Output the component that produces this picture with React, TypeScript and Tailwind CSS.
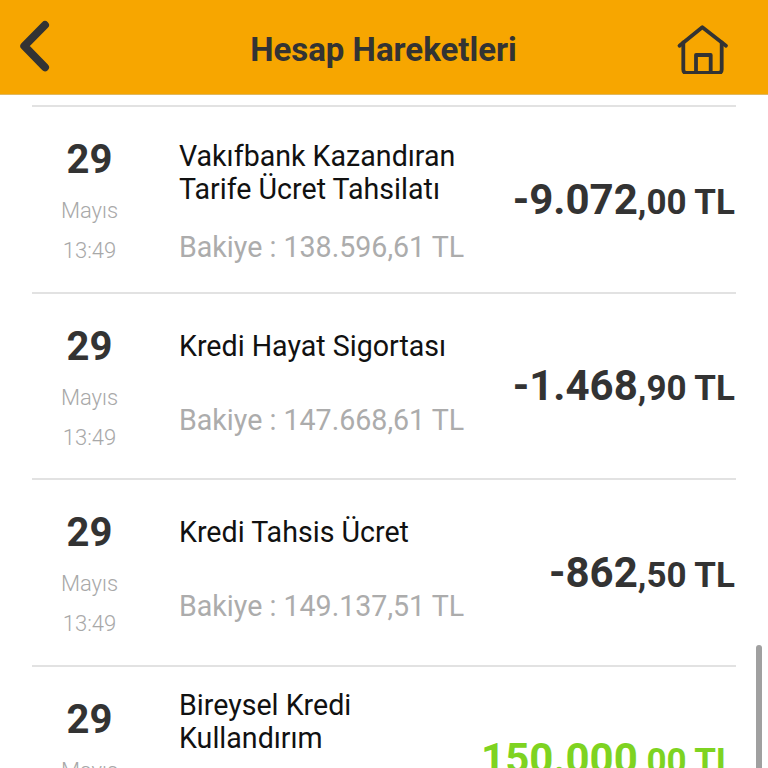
type Movement = {
  title: string[];
  balance: string;
  whole: string;
  cents: string;
  income?: boolean;
  textClass: string;
  titleClass: string;
};

const movements: Movement[] = [
  {
    title: ['Vakıfbank Kazandıran', 'Tarife Ücret Tahsilatı'],
    balance: '138.596,61',
    whole: '-9.072',
    cents: ',00 TL',
    textClass: 'pt-[33px]',
    titleClass: 'h-[85px]',
  },
  {
    title: ['Kredi Hayat Sigortası'],
    balance: '147.668,61',
    whole: '-1.468',
    cents: ',90 TL',
    textClass: 'pt-[36px]',
    titleClass: 'h-[68px]',
  },
  {
    title: ['Kredi Tahsis Ücret'],
    balance: '149.137,51',
    whole: '-862',
    cents: ',50 TL',
    textClass: 'pt-[36px]',
    titleClass: 'h-[68px]',
  },
  {
    title: ['Bireysel Kredi', 'Kullandırım'],
    balance: '149.137,51',
    whole: '150.000',
    cents: ',00 TL',
    income: true,
    textClass: 'pt-[22px]',
    titleClass: 'h-[82px]',
  },
];

function Row({ item }: { item: Movement }) {
  return (
    <li className="flex h-[186.5px] shrink-0 border-t-2 border-[#e2e2e2]">
      <div className="flex w-[115px] shrink-0 flex-col items-center pt-[30px]">
        <span className="text-[40px] leading-[46px] font-bold text-[#333333]">29</span>
        <span className="mt-[15px] text-[22px] leading-[26px] font-light text-[#a8a8a8]">Mayıs</span>
        <span className="mt-[14px] text-[22px] leading-[26px] font-light text-[#a8a8a8]">13:49</span>
      </div>
      <div className={`ml-[32px] flex w-[301px] shrink-0 flex-col ${item.textClass}`}>
        <div className={`${item.titleClass} text-[28.6px] leading-[33px] text-[#111111]`}>
          {item.title.map((line) => (
            <div key={line}>{line}</div>
          ))}
        </div>
        <div className="mt-[5px] text-[28.6px] leading-[34px] whitespace-nowrap text-[#acacac]">
          Bakiye : {item.balance} TL
        </div>
      </div>
      <div className="flex flex-1 items-center justify-end pr-[1px]">
        <span className={`font-bold whitespace-nowrap ${item.income ? 'text-[#7ed321]' : 'text-[#333333]'}`}>
          <span className="text-[42px]">{item.whole}</span>
          <span className="text-[35px]">{item.cents}</span>
        </span>
      </div>
    </li>
  );
}

export default function App() {
  return (
    <div className="relative h-[768px] w-[768px] overflow-hidden bg-white font-['Roboto',sans-serif]">
      <header className="flex h-[95px] items-center justify-between border-b border-[#e0b860] bg-[#f7a600] pr-[38px] pl-[14px]">
        <svg width="40" height="56" viewBox="0 0 40 56" fill="none" stroke="#333333" strokeWidth="8" strokeLinecap="round" strokeLinejoin="round">
          <path d="M31 6 L10.3 27 L31 48.3" />
        </svg>
        <h1 className="ml-[37px] pt-[5px] text-[33px] font-bold text-[#333333]">Hesap Hareketleri</h1>
        <svg width="54" height="54" viewBox="0 0 54 54" fill="none" stroke="#333333" strokeWidth="3.8" strokeLinecap="round" strokeLinejoin="round">
          <path d="M3.5 25.7 L26.3 7.3 L50 25.7" />
          <path d="M7.3 22.5 L7.3 49.5 Q7.3 53 10.5 53 L42.5 53 Q45.7 53 45.7 49.5 L45.7 22.5" />
          <path d="M20 53 L20 35 L34.7 35 L34.7 53" />
        </svg>
      </header>
      <ul className="mt-[10px] flex flex-col px-8">
        {movements.map((item) => (
          <Row key={item.whole} item={item} />
        ))}
      </ul>
      <div className="absolute top-[645px] right-[6px] h-[123px] w-[6px] rounded-t-sm bg-[#a0a0a0]" />
    </div>
  );
}
